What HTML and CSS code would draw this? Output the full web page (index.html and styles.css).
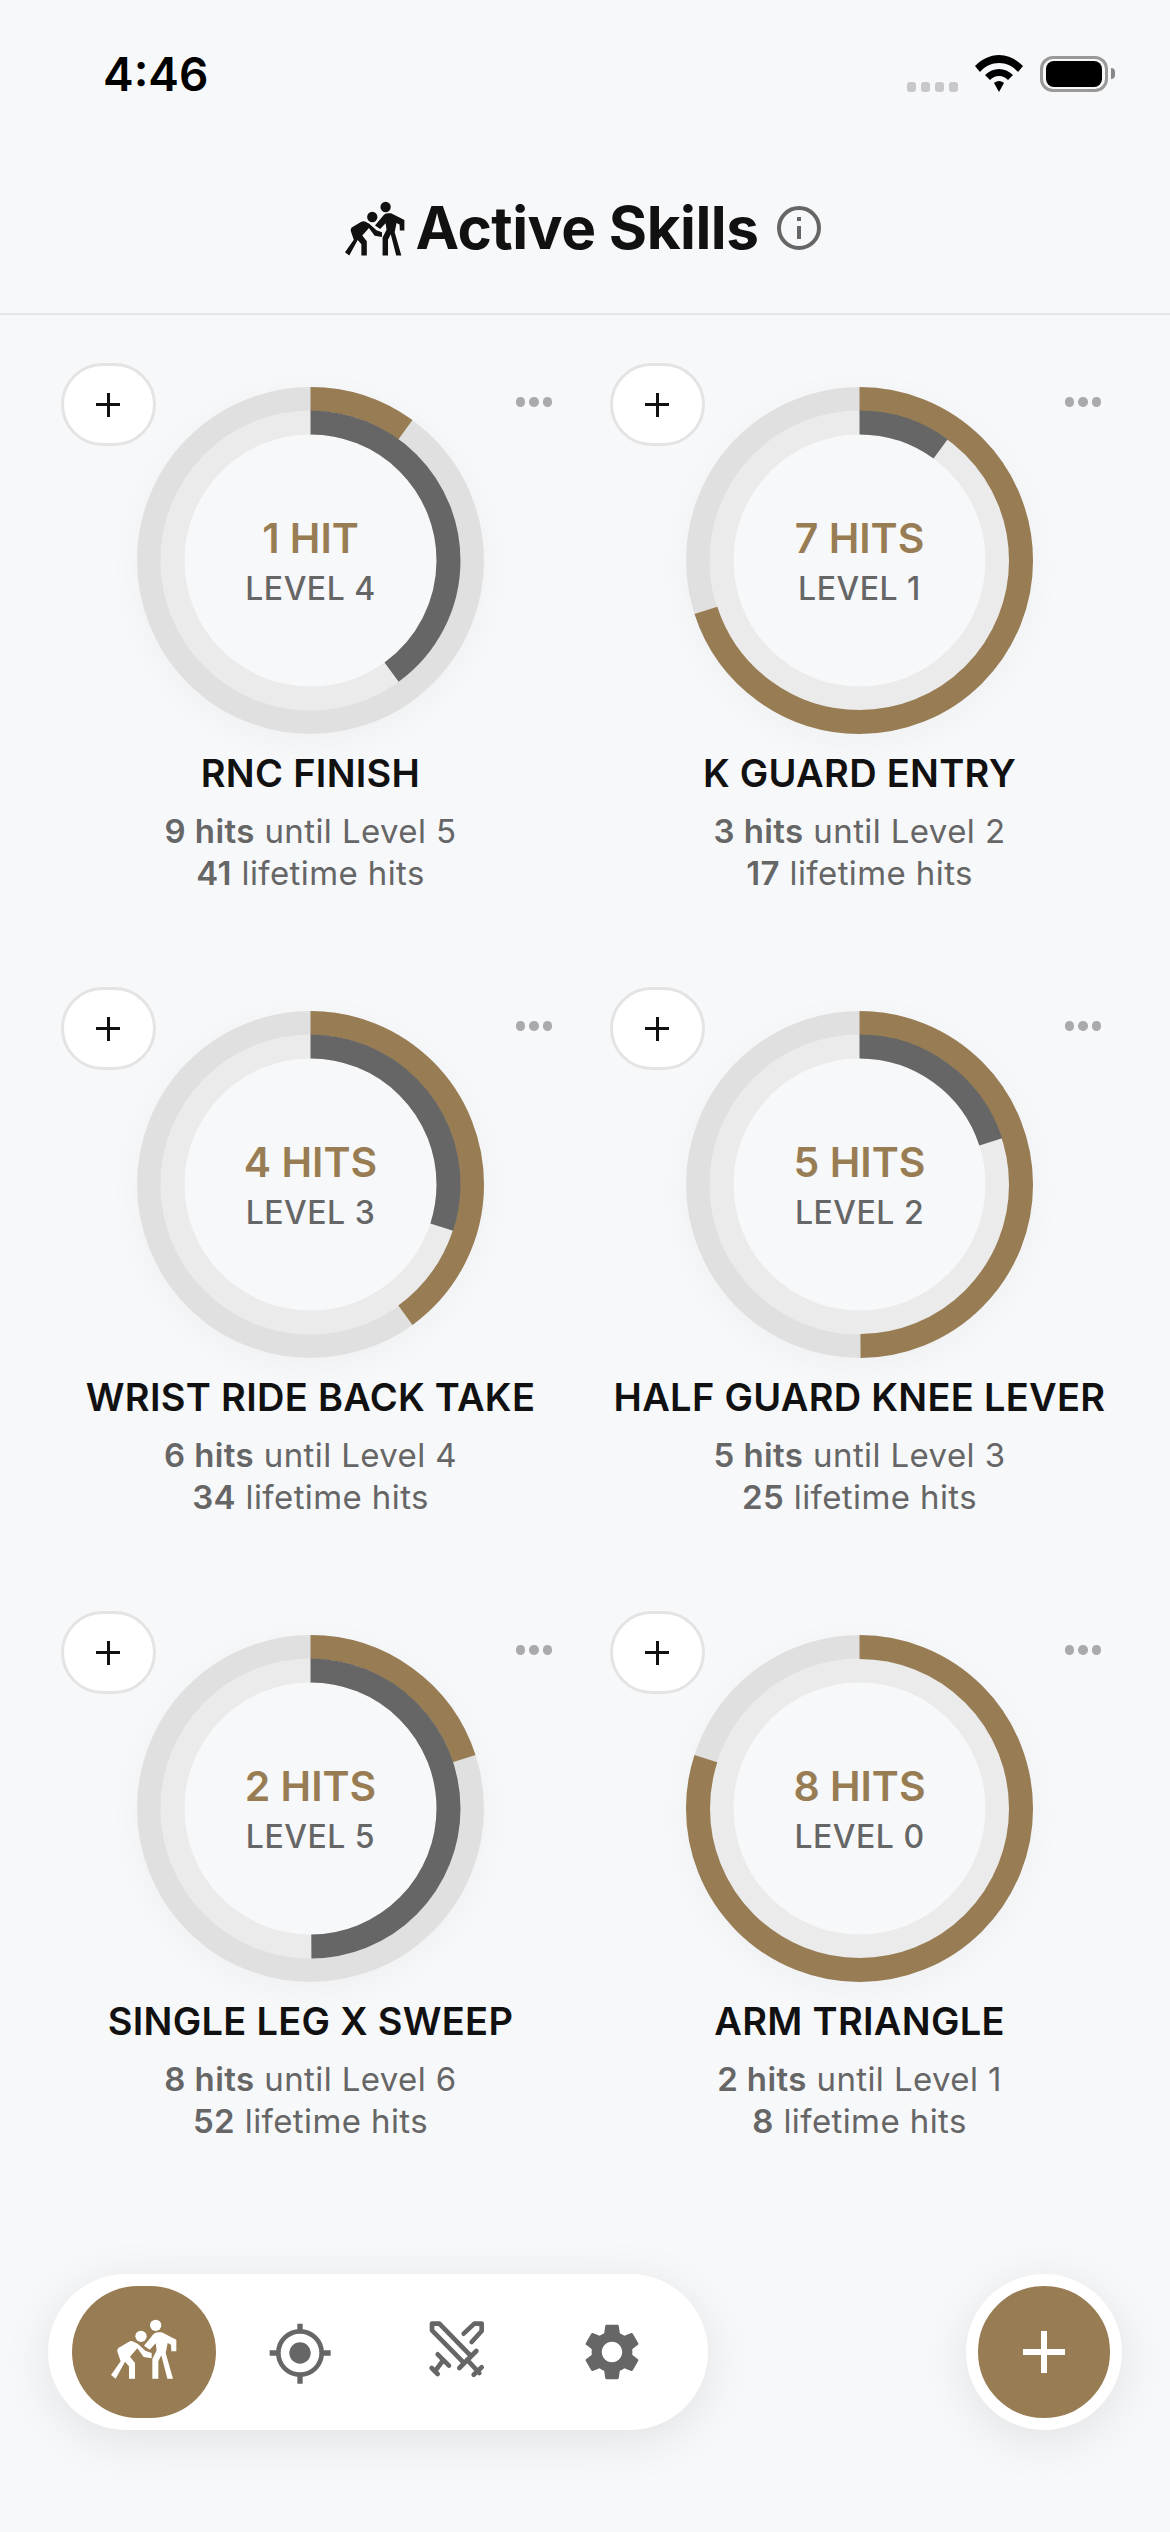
FILE: index.html
```html
<!DOCTYPE html>
<html lang="en">
  <head>
    <meta charset="UTF-8" />
    <meta name="viewport" content="width=device-width, initial-scale=1.0" />
    <title>Active Skills</title>
    <link rel="stylesheet" href="styles.css">
  </head>
  <body>
    <!-- Icon shared by the header and the nav -->
    <svg class="icon-defs" width="0" height="0">
      <symbol id="fighters" viewBox="36 28 198 180">
        <circle cx="170" cy="47" r="17" />
        <circle cx="126" cy="80" r="17" />
        <path d="M135 108 L163 74 Q168 68 178 68 L188 68 L232 90 L232 125 L217 125 L216 105 L206 100 L200 130 L222 207 L205 207 L187 137 L178 155 L178 207 L160 207 L160 148 L173 122 L170 101 L152 120 Z" />
        <path d="M90 96 Q96 92 104 96 L116 102 L140 124 L158 130 L158 146 L134 142 L115 116 L93 141 L108 160 L108 207 L90 207 L90 170 L78 156 L50 207 L36 196 L65 155 L55 126 Q54 120 58 115 Z" />
      </symbol>
    </svg>

    <div class="status-bar">
      <span class="status-time">4:46</span>
      <div class="status-icons">
        <div class="signal"><i></i><i></i><i></i><i></i></div>
        <svg class="wifi" width="48" height="37" viewBox="0 0 48 37">
          <path d="M24 0 C33 0 41 4 48 11 L43 17 C38 11 31 8 24 8 C17 8 10 11 5 17 L0 11 C7 4 15 0 24 0 Z" />
          <path d="M24 14 C29 14 34 16 38 20 L33 25 C31 23 28 21 24 21 C20 21 17 23 15 25 L10 20 C14 16 19 14 24 14 Z" />
          <path d="M24 26 C26 26 28 27 29 28 L24 37 L19 28 C20 27 22 26 24 26 Z" />
        </svg>
        <div class="battery"><div class="battery-fill"></div></div>
        <div class="battery-cap"></div>
      </div>
    </div>

    <header class="page-header">
      <svg class="header-icon"><use href="#fighters" /></svg>
      <h1>Active Skills</h1>
      <svg class="info-icon" width="44" height="44" viewBox="0 0 44 44">
        <circle cx="22" cy="22" r="20" />
        <line x1="22" y1="20" x2="22" y2="33" />
        <line x1="22" y1="11" x2="22" y2="15" />
      </svg>
    </header>

    <main class="skills-grid">
      <section class="skill-card">
        <button class="add-hit"></button>
        <div class="card-menu"><i></i><i></i><i></i></div>
        <div class="ring">
          <svg class="ring-svg" viewBox="0 0 347 347">
            <circle class="track-outer" cx="173.5" cy="173.5" r="161.5" />
            <circle class="track-inner" cx="173.5" cy="173.5" r="138" />
            <circle class="arc-hits" cx="173.5" cy="173.5" r="161.5" pathLength="100" stroke-dasharray="10 100" />
            <circle class="arc-level" cx="173.5" cy="173.5" r="138" pathLength="100" stroke-dasharray="40 100" />
          </svg>
          <div class="ring-label">
            <span class="ring-hits">1 HIT</span>
            <span class="ring-level">LEVEL 4</span>
          </div>
        </div>
        <h2>RNC FINISH</h2>
        <p class="skill-info"><b>9 hits</b> until Level 5<br><b>41</b> lifetime hits</p>
      </section>

      <section class="skill-card">
        <button class="add-hit"></button>
        <div class="card-menu"><i></i><i></i><i></i></div>
        <div class="ring">
          <svg class="ring-svg" viewBox="0 0 347 347">
            <circle class="track-outer" cx="173.5" cy="173.5" r="161.5" />
            <circle class="track-inner" cx="173.5" cy="173.5" r="138" />
            <circle class="arc-hits" cx="173.5" cy="173.5" r="161.5" pathLength="100" stroke-dasharray="70 100" />
            <circle class="arc-level" cx="173.5" cy="173.5" r="138" pathLength="100" stroke-dasharray="10 100" />
          </svg>
          <div class="ring-label">
            <span class="ring-hits">7 HITS</span>
            <span class="ring-level">LEVEL 1</span>
          </div>
        </div>
        <h2>K GUARD ENTRY</h2>
        <p class="skill-info"><b>3 hits</b> until Level 2<br><b>17</b> lifetime hits</p>
      </section>

      <section class="skill-card">
        <button class="add-hit"></button>
        <div class="card-menu"><i></i><i></i><i></i></div>
        <div class="ring">
          <svg class="ring-svg" viewBox="0 0 347 347">
            <circle class="track-outer" cx="173.5" cy="173.5" r="161.5" />
            <circle class="track-inner" cx="173.5" cy="173.5" r="138" />
            <circle class="arc-hits" cx="173.5" cy="173.5" r="161.5" pathLength="100" stroke-dasharray="40 100" />
            <circle class="arc-level" cx="173.5" cy="173.5" r="138" pathLength="100" stroke-dasharray="30 100" />
          </svg>
          <div class="ring-label">
            <span class="ring-hits">4 HITS</span>
            <span class="ring-level">LEVEL 3</span>
          </div>
        </div>
        <h2>WRIST RIDE BACK TAKE</h2>
        <p class="skill-info"><b>6 hits</b> until Level 4<br><b>34</b> lifetime hits</p>
      </section>

      <section class="skill-card">
        <button class="add-hit"></button>
        <div class="card-menu"><i></i><i></i><i></i></div>
        <div class="ring">
          <svg class="ring-svg" viewBox="0 0 347 347">
            <circle class="track-outer" cx="173.5" cy="173.5" r="161.5" />
            <circle class="track-inner" cx="173.5" cy="173.5" r="138" />
            <circle class="arc-hits" cx="173.5" cy="173.5" r="161.5" pathLength="100" stroke-dasharray="49.9 100" />
            <circle class="arc-level" cx="173.5" cy="173.5" r="138" pathLength="100" stroke-dasharray="20 100" />
          </svg>
          <div class="ring-label">
            <span class="ring-hits">5 HITS</span>
            <span class="ring-level">LEVEL 2</span>
          </div>
        </div>
        <h2>HALF GUARD KNEE LEVER</h2>
        <p class="skill-info"><b>5 hits</b> until Level 3<br><b>25</b> lifetime hits</p>
      </section>

      <section class="skill-card">
        <button class="add-hit"></button>
        <div class="card-menu"><i></i><i></i><i></i></div>
        <div class="ring">
          <svg class="ring-svg" viewBox="0 0 347 347">
            <circle class="track-outer" cx="173.5" cy="173.5" r="161.5" />
            <circle class="track-inner" cx="173.5" cy="173.5" r="138" />
            <circle class="arc-hits" cx="173.5" cy="173.5" r="161.5" pathLength="100" stroke-dasharray="20 100" />
            <circle class="arc-level" cx="173.5" cy="173.5" r="138" pathLength="100" stroke-dasharray="49.9 100" />
          </svg>
          <div class="ring-label">
            <span class="ring-hits">2 HITS</span>
            <span class="ring-level">LEVEL 5</span>
          </div>
        </div>
        <h2>SINGLE LEG X SWEEP</h2>
        <p class="skill-info"><b>8 hits</b> until Level 6<br><b>52</b> lifetime hits</p>
      </section>

      <section class="skill-card">
        <button class="add-hit"></button>
        <div class="card-menu"><i></i><i></i><i></i></div>
        <div class="ring">
          <svg class="ring-svg" viewBox="0 0 347 347">
            <circle class="track-outer" cx="173.5" cy="173.5" r="161.5" />
            <circle class="track-inner" cx="173.5" cy="173.5" r="138" />
            <circle class="arc-hits" cx="173.5" cy="173.5" r="161.5" pathLength="100" stroke-dasharray="80 100" />
          </svg>
          <div class="ring-label">
            <span class="ring-hits">8 HITS</span>
            <span class="ring-level">LEVEL 0</span>
          </div>
        </div>
        <h2>ARM TRIANGLE</h2>
        <p class="skill-info"><b>2 hits</b> until Level 1<br><b>8</b> lifetime hits</p>
      </section>
    </main>

    <!-- Barra inferior -->
    <footer class="bottom-bar">
      <nav class="nav-pill">
        <div class="nav-item active">
          <svg class="nav-fighters"><use href="#fighters" /></svg>
        </div>
        <div class="nav-item">
          <svg class="nav-icon" viewBox="0 0 270 270">
            <circle class="line" cx="135" cy="138" r="65" />
            <circle class="solid" cx="135" cy="138" r="32" />
            <path class="solid" d="M127 50 H143 V74 H127 Z M127 203 H143 V230 H127 Z M44 130 H70 V146 H44 Z M200 130 H227 V146 H200 Z" />
          </svg>
        </div>
        <div class="nav-item">
          <svg class="nav-icon" viewBox="0 0 270 270">
            <path class="line" d="M158 80 L190 50 H212 V72 L182 105" />
            <path class="line" d="M178 145 L85 50 H63 V70 L158 167" />
            <path class="line" d="M145 183 L196 132 M168 158 L205 198 M188 203 L212 181" />
            <path class="line" d="M80 142 L114 176 M97 159 L74 190 M62 183 L80 201" />
          </svg>
        </div>
        <div class="nav-item">
          <svg class="nav-gear" viewBox="0 0 24 24">
            <path class="solid" d="M19.14 12.94c.04-.3.06-.61.06-.94 0-.32-.02-.64-.07-.94l2.03-1.58c.18-.14.23-.41.12-.61l-1.92-3.32c-.12-.22-.37-.29-.59-.22l-2.39.96c-.5-.38-1.03-.7-1.62-.94l-.36-2.54c-.04-.24-.24-.41-.48-.41h-3.84c-.24 0-.43.17-.47.41l-.36 2.54c-.59.24-1.13.57-1.62.94l-2.39-.96c-.22-.08-.47 0-.59.22L2.74 8.87c-.12.21-.08.47.12.61l2.03 1.58c-.05.3-.09.63-.09.94s.02.64.07.94l-2.03 1.58c-.18.14-.23.41-.12.61l1.92 3.32c.12.22.37.29.59.22l2.39-.96c.5.38 1.03.7 1.62.94l.36 2.54c.05.24.24.41.48.41h3.84c.24 0 .44-.17.47-.41l.36-2.54c.59-.24 1.13-.56 1.62-.94l2.39.96c.22.08.47 0 .59-.22l1.92-3.32c.12-.22.07-.47-.12-.61l-2.01-1.58zM12 15.6c-1.98 0-3.6-1.62-3.6-3.6s1.62-3.6 3.6-3.6 3.6 1.62 3.6 3.6-1.62 3.6-3.6 3.6z" />
          </svg>
        </div>
      </nav>
      <button class="fab"></button>
    </footer>
  </body>
</html>
```

FILE: styles.css
```css
* {
  box-sizing: border-box;
}

body {
  font-family: Inter, "Noto Sans", sans-serif;
  background-color: #f7f8fa;
  color: #111;
  margin: 0;
  padding: 0;
  height: 2532px;
  overflow: hidden;
}

.icon-defs {
  position: absolute;
}

/* Status bar */
.status-bar {
  display: flex;
  justify-content: space-between;
  align-items: flex-start;
  height: 144px;
  padding: 49px 55px 0 103px;
}

.status-time {
  font-size: 46px;
  line-height: 50px;
  font-weight: 600;
  color: #000;
}

.status-icons {
  display: flex;
  align-items: flex-start;
  padding-top: 6px;
}

.signal {
  display: flex;
  gap: 5px;
  margin-top: 27px;
  margin-right: 17px;
}

.signal i {
  display: block;
  width: 9px;
  height: 10px;
  border-radius: 3px;
  background-color: #c8c8ca;
}

.wifi {
  fill: #000;
  margin-right: 17px;
}

.battery {
  width: 68px;
  height: 36px;
  border: 3px solid #999;
  border-radius: 13px;
  padding: 2px 3px;
  margin-top: 1px;
}

.battery-fill {
  width: 100%;
  height: 100%;
  background-color: #000;
  border-radius: 8px;
}

.battery-cap {
  width: 4px;
  height: 11px;
  margin: 13px 0 0 3px;
  background-color: #888;
  border-radius: 0 4px 4px 0;
}

/* Header */
.page-header {
  display: flex;
  justify-content: center;
  align-items: center;
  gap: 14px;
  height: 171px;
  padding-bottom: 1px;
  padding-right: 4px;
  border-bottom: 2px solid #e4e5e8;
}

.page-header h1 {
  margin: 0;
  font-size: 58.5px;
  line-height: 68px;
  font-weight: 700;
  letter-spacing: -0.5px;
  color: #111;
}

.header-icon {
  width: 60px;
  height: 55px;
  margin-right: -3px;
  fill: #111;
}

.info-icon {
  fill: none;
  stroke: #666;
  stroke-width: 4;
  margin-left: 5px;
}

/* Grid */
.skills-grid {
  display: grid;
  grid-template-columns: 1fr 1fr;
  row-gap: 93px;
  padding: 48px 36px 0;
}

.skill-card {
  position: relative;
  display: flex;
  flex-direction: column;
  align-items: center;
  padding-top: 24px;
  text-align: center;
  min-width: 0;
}

.add-hit {
  position: absolute;
  top: 0;
  left: 25px;
  z-index: 1;
  width: 95px;
  height: 83px;
  padding: 0;
  background-color: #fff;
  border: 3px solid #e4e4e4;
  border-radius: 42px;
}

.add-hit::before,
.add-hit::after {
  content: "";
  position: absolute;
  background-color: #111;
}

.add-hit::before {
  left: 32px;
  top: 37px;
  width: 24px;
  height: 3px;
}

.add-hit::after {
  left: 43px;
  top: 27px;
  width: 3px;
  height: 24px;
}

.card-menu {
  position: absolute;
  top: 34px;
  right: 33px;
  display: flex;
  gap: 4px;
}

.card-menu i {
  display: block;
  width: 9.5px;
  height: 9.5px;
  border-radius: 50%;
  background-color: #aaaaae;
}

.ring {
  position: relative;
  width: 347px;
  height: 347px;
  border-radius: 50%;
  box-shadow: 0 8px 36px rgba(0, 0, 0, 0.035);
}

.ring-svg {
  display: block;
  width: 100%;
  height: 100%;
  fill: none;
  transform: rotate(-90deg);
}

.track-outer,
.arc-hits {
  stroke-width: 24;
}

.track-inner,
.arc-level {
  stroke-width: 24;
}

.track-outer {
  stroke: #e0e0e0;
}

.track-inner {
  stroke: #ebebeb;
}

.arc-hits {
  stroke: #987d54;
}

.arc-level {
  stroke: #666;
}

.ring-label {
  position: absolute;
  inset: 0;
  display: flex;
  flex-direction: column;
  justify-content: center;
  align-items: center;
  gap: 6px;
}

.ring-hits {
  font-size: 41px;
  line-height: 50px;
  font-weight: 600;
  color: #987d54;
}

.ring-level {
  font-size: 32px;
  line-height: 40px;
  font-weight: 500;
  letter-spacing: 0.5px;
  color: #666;
}

.skill-card h2 {
  margin: 17px 0 0;
  font-size: 38px;
  line-height: 44px;
  font-weight: 600;
  letter-spacing: 0.3px;
  color: #111;
  white-space: nowrap;
}

.skill-info {
  margin: 15px 0 0;
  font-size: 33px;
  line-height: 42px;
  letter-spacing: 0.4px;
  color: #666;
}

.skill-info b {
  font-weight: 600;
}

/* Bottom bar */
.bottom-bar {
  display: flex;
  justify-content: space-between;
  margin-top: 132px;
  padding: 0 48px;
}

.nav-pill {
  display: flex;
  gap: 12px;
  padding: 12px 24px;
  height: 156px;
  background-color: #fff;
  border-radius: 78px;
  box-shadow: 0 10px 50px rgba(0, 0, 0, 0.09);
}

.nav-item {
  display: flex;
  justify-content: center;
  align-items: center;
  width: 144px;
  height: 132px;
  border-radius: 66px;
}

.nav-item.active {
  background-color: #987d54;
}

.nav-fighters {
  width: 66px;
  height: 60px;
  fill: #fff;
  margin-bottom: 6px;
}

.nav-icon {
  width: 90px;
  height: 90px;
}

.nav-gear {
  width: 68px;
  height: 68px;
}

.line {
  fill: none;
  stroke: #666;
  stroke-width: 14;
  stroke-linecap: round;
  stroke-linejoin: round;
}

.solid {
  fill: #666;
}

.fab {
  position: relative;
  width: 156px;
  height: 156px;
  padding: 0;
  background-color: #987d54;
  border: 12px solid #fff;
  border-radius: 50%;
  box-shadow: 0 10px 50px rgba(0, 0, 0, 0.09);
}

.fab::before,
.fab::after {
  content: "";
  position: absolute;
  background-color: #fff;
}

.fab::before {
  left: 45px;
  top: 63px;
  width: 42px;
  height: 6px;
}

.fab::after {
  left: 63px;
  top: 45px;
  width: 6px;
  height: 42px;
}
```
